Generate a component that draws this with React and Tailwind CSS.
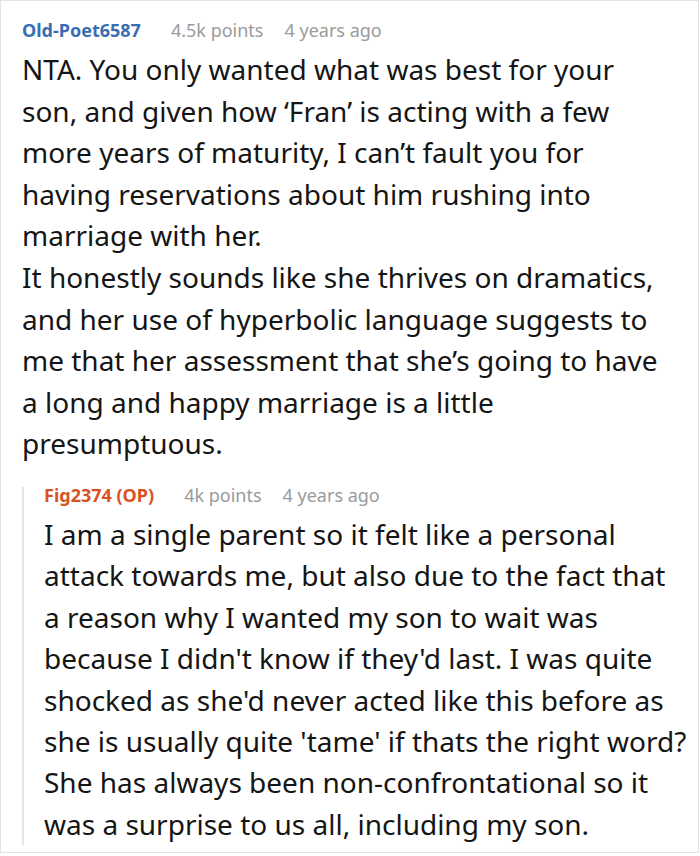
const main = [
  "NTA. You only wanted what was best for your",
  "son, and given how ‘Fran’ is acting with a few",
  "more years of maturity, I can’t fault you for",
  "having reservations about him rushing into",
  "marriage with her.",
  "It honestly sounds like she thrives on dramatics,",
  "and her use of hyperbolic language suggests to",
  "me that her assessment that she’s going to have",
  "a long and happy marriage is a little",
  "presumptuous.",
];

const reply = [
  "I am a single parent so it felt like a personal",
  "attack towards me, but also due to the fact that",
  "a reason why I wanted my son to wait was",
  "because I didn't know if they'd last. I was quite",
  "shocked as she'd never acted like this before as",
  "she is usually quite 'tame' if thats the right word?",
  "She has always been non-confrontational so it",
  "was a surprise to us all, including my son.",
];

export default function App() {
  return (
    <div className="w-[700px] h-[856px] bg-white" style={{ fontFamily: '"Noto Sans", sans-serif' }}>
      <div className="w-[699px] h-[853px] border border-[#e3e3e3] pl-[21px] pt-[15px] pr-[4px] box-border">
        <div className="flex items-baseline text-[18px] leading-[28px]">
          <span className="font-bold text-[#3b6db3]">Old-Poet6587</span>
          <span className="ml-[30px] text-[#9a9a9a]">4.5k points</span>
          <span className="ml-[21px] text-[#9a9a9a]">4 years ago</span>
        </div>
        <div className="mt-[5px] text-[28px] leading-[41.6px] text-[#151515]">
          {main.map((l, i) => (
            <div key={i} className="whitespace-nowrap">{l}</div>
          ))}
        </div>
        <div className="mt-[22px] border-l-2 border-[#e6e6e6] pl-[20px]">
          <div className="flex items-center text-[18px] leading-[16px] h-[16px]">
            <span className="font-bold text-[#d8531f]">Fig2374 (OP)</span>
            <span className="ml-[30px] text-[#9a9a9a]">4k points</span>
            <span className="ml-[21px] text-[#9a9a9a]">4 years ago</span>
          </div>
          <div className="mt-[11px] mb-[-8px] text-[28px] leading-[41.4px] text-[#151515]">
            {reply.map((l, i) => (
              <div key={i} className="whitespace-nowrap">{l}</div>
            ))}
          </div>
        </div>
      </div>
    </div>
  );
}
